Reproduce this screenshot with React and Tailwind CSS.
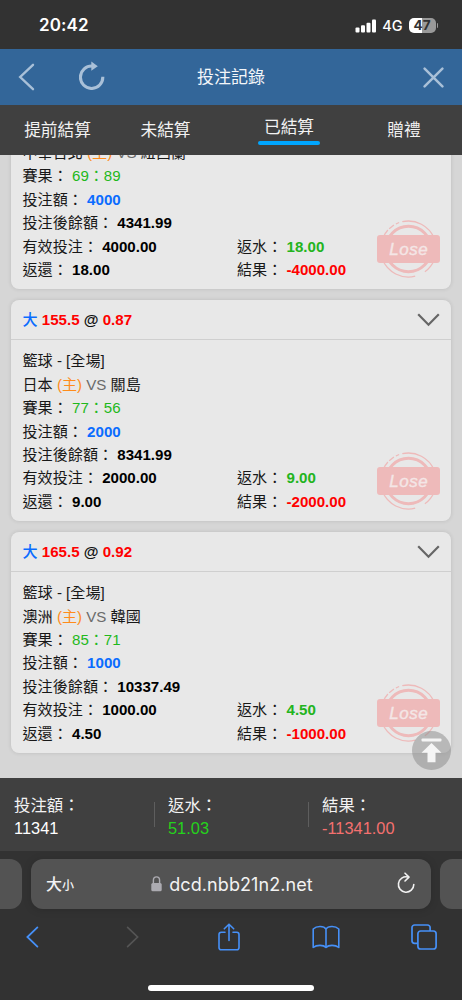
import clsx from 'clsx';

const TABS = [
  { id: 'early', label: '提前結算' },
  { id: 'open', label: '未結算' },
  { id: 'settled', label: '已結算' },
  { id: 'gift', label: '贈禮' },
];

const BETS = [
  {
    id: 1,
    home: '中華台北',
    away: '紐西蘭',
    score: '69：89',
    stake: '4000',
    balance: '4341.99',
    valid: '4000.00',
    rebate: '18.00',
    result: '-4000.00',
  },
  {
    id: 2,
    line: '155.5',
    odds: '0.87',
    league: '籃球 - [全場]',
    home: '日本',
    away: '關島',
    score: '77：56',
    stake: '2000',
    balance: '8341.99',
    valid: '2000.00',
    rebate: '9.00',
    result: '-2000.00',
  },
  {
    id: 3,
    line: '165.5',
    odds: '0.92',
    league: '籃球 - [全場]',
    home: '澳洲',
    away: '韓國',
    score: '85：71',
    stake: '1000',
    balance: '10337.49',
    valid: '1000.00',
    rebate: '4.50',
    result: '-1000.00',
  },
];

const TOTALS = [
  { label: '投注額：', value: '11341', tone: 'text-white' },
  { label: '返水：', value: '51.03', tone: 'text-[#25d21c]' },
  { label: '結果：', value: '-11341.00', tone: 'text-[#f4706f]' },
];

function StatusBar() {
  return (
    <div className="flex h-[49px] shrink-0 items-center justify-between bg-[#323232] pl-[39px] pr-[24px] pt-[2px] font-['Inter'] text-white">
      <span className="text-[17px] font-semibold tracking-[0.1px]">20:42</span>
      <div className="flex items-center">
        <svg width="22" height="14" viewBox="0 0 22 14" fill="currentColor" aria-hidden="true">
          <rect x="0.5" y="8.5" width="4" height="5" rx="1" />
          <rect x="6" y="6.3" width="4" height="7.2" rx="1" />
          <rect x="11.5" y="3.7" width="4" height="9.8" rx="1" />
          <rect x="17" y="0.5" width="4" height="13" rx="1" />
        </svg>
        <span className="ml-[5px] text-[14.5px] font-medium">4G</span>
        <span className="ml-[6px] flex h-[15px] w-[27px] items-center justify-center rounded-[5px] bg-[linear-gradient(90deg,#fff_48%,#999_48%)] text-[13.5px] font-bold leading-none text-[#323232]">
          47
        </span>
        <span className="ml-px h-[5px] w-[1.5px] rounded-r-full bg-[#999]" />
      </div>
    </div>
  );
}

function Header() {
  return (
    <header className="grid h-[56px] shrink-0 grid-cols-[1fr_auto_1fr] items-center bg-[#336699] px-[18px] text-[#a9c0d8]">
      <div className="flex items-center gap-[43px]">
        <svg width="18" height="28" viewBox="0 0 18 28" fill="none" stroke="currentColor" strokeWidth="2.4" aria-hidden="true">
          <path d="M15 1.8 2.2 14 15 26.2" strokeLinecap="round" />
        </svg>
        <svg className="mb-[3px]" width="26" height="29" viewBox="0 0 26 29" fill="none" aria-hidden="true">
          <path d="M13.5 5.1A11.2 11.2 0 1 0 23.8 15.8" stroke="currentColor" strokeWidth="3.1" />
          <path d="M12.3 0.6 18.8 5.2 12.3 9.8Z" fill="currentColor" />
        </svg>
      </div>
      <h1 className="pt-px text-[17px] text-[#f3f6f9]">投注記錄</h1>
      <svg className="justify-self-end" width="21" height="21" viewBox="0 0 21 21" fill="none" stroke="currentColor" strokeWidth="2.5" strokeLinecap="round" aria-hidden="true">
        <path d="m1.6 1.6 17.8 17.8M19.4 1.6 1.6 19.4" />
      </svg>
    </header>
  );
}

function Tabs({ active }) {
  return (
    <nav className="grid h-[50px] shrink-0 grid-cols-[115px_101px_146px_84px] justify-items-center bg-[#404040] text-[16.7px] leading-[26px] text-[#f2f2f2]">
      {TABS.map((tab) => (
        <div
          key={tab.id}
          className={clsx(
            tab.id === active
              ? 'mt-[10px] flex h-[30px] w-[62px] flex-col items-center justify-between'
              : 'mt-[13px]'
          )}
        >
          <span className="whitespace-nowrap">{tab.label}</span>
          {tab.id === active && <span className="h-[4px] w-full shrink-0 rounded-full bg-[#00a6ff]" />}
        </div>
      ))}
    </nav>
  );
}

function LoseStamp() {
  return (
    <svg
      className="absolute bottom-[10px] right-[11px] text-[#eebaba]"
      width="63"
      height="60"
      viewBox="0.5 0 63 60"
      fill="none"
      aria-hidden="true"
    >
      <circle cx="32" cy="30" r="22.7" stroke="currentColor" strokeWidth="3" />
      <g stroke="currentColor" strokeWidth="1.3">
        <path d="M25.8 2.7A28 28 0 0 1 57.8 19.5" />
        <path d="M19.4 5 22.6 3.5" />
        <path d="M12.7 9.7 17.4 6.1" />
        <path d="M6.2 19.2A28 28 0 0 1 11.4 11" />
        <path d="M6 40.6A28 28 0 0 0 38.7 57.2" />
        <path d="M48.4 52.8A28 28 0 0 0 58 40.6" />
      </g>
      <rect x="0.5" y="16" width="63" height="28" rx="3" fill="currentColor" />
      <text
        x="32.3"
        y="36.2"
        textAnchor="middle"
        fontFamily="Liberation Sans, sans-serif"
        fontSize="17"
        fontStyle="italic"
        letterSpacing="0.6"
        fill="#f4e6e6"
        stroke="#f4e6e6"
        strokeWidth="0.4"
      >
        Lose
      </text>
    </svg>
  );
}

function Amount({ label, value, tone = 'text-black' }) {
  return (
    <p>
      {label}： <b className={tone}>{value}</b>
    </p>
  );
}

function BetCard({ bet }) {
  return (
    <article className="relative shrink-0 rounded-[8px] bg-[#e8e8e8] text-[15.1px] text-[#181818] shadow-[0_0_4px_rgba(0,0,0,0.12)]">
      {bet.line && (
        <div className="flex h-[40px] items-center justify-between border-b border-[#cfcfcf] pl-[11.5px] pr-[11px]">
          <p className="pt-px font-bold text-[#ff0000]">
            <span className="font-medium text-[#0a6cff]">大</span> {bet.line}{' '}
            <span className="text-[#111]">@</span> {bet.odds}
          </p>
          <svg width="23" height="14" viewBox="0 0 23 14" fill="none" stroke="#666" strokeWidth="2.2" aria-hidden="true">
            <path d="M1.2 1.3 11.5 11.8 21.8 1.3" />
          </svg>
        </div>
      )}
      <div className="px-[11.5px] pb-[8px] pt-[9px] leading-[23.4px]">
        {bet.league && <p>{bet.league}</p>}
        <p>
          {bet.home} <span className="text-[#ff8c1a]">(主)</span>{' '}
          <span className="text-[#6b6b6b]">VS</span> {bet.away}
        </p>
        <p>
          賽果： <span className="text-[#1fb81c]">{bet.score}</span>
        </p>
        <Amount label="投注額" value={bet.stake} tone="text-[#0a6cff]" />
        <Amount label="投注後餘額" value={bet.balance} />
        <div className="grid grid-cols-[214.5px_1fr]">
          <Amount label="有效投注" value={bet.valid} />
          <Amount label="返水" value={bet.rebate} tone="text-[#23b41e]" />
          <Amount label="返還" value={bet.rebate} />
          <Amount label="結果" value={bet.result} tone="text-[#ff0000]" />
        </div>
      </div>
      <LoseStamp />
    </article>
  );
}

function Totals() {
  return (
    <div className="grid h-[73px] shrink-0 grid-cols-3 bg-[#404040]">
      {TOTALS.map((item, index) => (
        <div key={item.label} className="flex items-center">
          <span className={clsx('h-[25px] w-px', index > 0 && 'bg-[#5e5e5e]')} />
          <div className="pl-[13px] pt-[4px] text-[16.4px] leading-[23px] text-[#f2f2f2]">
            <p>{item.label}</p>
            <p className={item.tone}>{item.value}</p>
          </div>
        </div>
      ))}
    </div>
  );
}

function BrowserBar() {
  return (
    <footer className="flex flex-1 flex-col bg-[#323232] pt-[8px] font-['Inter','Noto_Sans_CJK_TC',sans-serif]">
      <div className="flex h-[50px] shrink-0 gap-[9px]">
        <div className="w-[22px] rounded-r-[12px] bg-[#535353]" />
        <div className="flex flex-1 items-center justify-between rounded-[12px] bg-[#535353] pl-[15px] pr-[16px] text-[#f2f2f2] shadow-[0_1px_8px_rgba(0,0,0,0.15)]">
          <span className="flex items-baseline font-medium">
            <span className="text-[16px]">大</span>
            <span className="text-[12px]">小</span>
          </span>
          <span className="flex items-center pr-[7px]">
            <svg width="11" height="16" viewBox="0 0 11 16" aria-hidden="true">
              <path d="M2.4 8V4.3a3.1 3.4 0 0 1 6.2 0V8" fill="none" stroke="#acabb1" strokeWidth="1.4" />
              <rect x="0.3" y="7" width="10.4" height="8.3" rx="1.6" fill="#acabb1" />
            </svg>
            <span className="ml-[7px] text-[18px] tracking-[0.08px]">dcd.nbb21n2.net</span>
          </span>
          <svg className="mb-[2px]" width="18" height="22" viewBox="0 0 18 22" fill="none" stroke="currentColor" strokeWidth="1.6" strokeLinecap="round" strokeLinejoin="round" aria-hidden="true">
            <path d="M10.8 5A7.7 7.7 0 1 0 16.8 12.6" />
            <path d="m8 1.2 4 3.9-4 3.9" />
          </svg>
        </div>
        <div className="w-[22px] rounded-l-[12px] bg-[#535353]" />
      </div>
      <div className="mt-[13px] grid h-[30px] grid-cols-[repeat(5,28px)] items-center justify-between justify-items-center pl-[18px] pr-[24px] text-[#4690f7]">
        <svg width="13" height="22" viewBox="0 0 13 22" fill="none" stroke="currentColor" strokeWidth="1.8" strokeLinecap="round" aria-hidden="true">
          <path d="M11.4 1.4 1.4 11l10 9.6" />
        </svg>
        <svg className="ml-[4px]" width="13" height="22" viewBox="0 0 13 22" fill="none" stroke="#555" strokeWidth="1.7" strokeLinecap="round" aria-hidden="true">
          <path d="m1.6 1.4 10 9.6-10 9.6" />
        </svg>
        <svg className="ml-px" width="22" height="28" viewBox="0 0 22 28" fill="none" stroke="currentColor" strokeWidth="1.6" strokeLinecap="round" strokeLinejoin="round" aria-hidden="true">
          <path d="M7 9.2H3.3A2.3 2.3 0 0 0 1 11.5v13a2.3 2.3 0 0 0 2.3 2.3h15.4a2.3 2.3 0 0 0 2.3-2.3v-13a2.3 2.3 0 0 0-2.3-2.3H15" />
          <path d="M11 17.4V1.4M6.3 5.8 11 1.2l4.7 4.6" />
        </svg>
        <svg width="28" height="24" viewBox="0 0 28 24" fill="none" stroke="currentColor" strokeWidth="1.6" strokeLinejoin="round" aria-hidden="true">
          <path d="M14 4.2C12 .7 4.6.7 1.2 4v18.4c3.6-2.7 10.2-2.7 12.8 0 2.6-2.7 9.2-2.7 12.8 0V4C23.4.7 16 .7 14 4.2Z" />
          <path d="M14 4.2v18.2" />
        </svg>
        <svg width="26" height="26" viewBox="0 0 26 26" fill="none" stroke="currentColor" strokeWidth="1.7" aria-hidden="true">
          <rect x="6.9" y="7" width="18.2" height="18" rx="2.8" />
          <path d="M6.9 19.3H3.6A2.6 2.6 0 0 1 1 16.7V3.6A2.6 2.6 0 0 1 3.6 1h12.9a2.6 2.6 0 0 1 2.6 2.6V7" />
        </svg>
      </div>
      <div className="mt-[33px] h-[6px] w-[166px] self-center rounded-full bg-white" />
    </footer>
  );
}

export default function App() {
  return (
    <div className="flex h-[1000px] w-[462px] flex-col overflow-hidden font-['Liberation_Sans','Noto_Sans_CJK_TC',sans-serif]">
      <StatusBar />
      <Header />
      <Tabs active="settled" />
      <main className="relative flex h-[623px] shrink-0 flex-col justify-end gap-[11px] overflow-hidden bg-[#d6d6d6] px-[11px] pb-[25px]">
        {BETS.map((bet) => (
          <BetCard key={bet.id} bet={bet} />
        ))}
        <button
          className="absolute bottom-[8px] right-[11px] flex h-[39px] w-[39px] items-center justify-center rounded-full bg-[#888888]/50"
          aria-label="Top"
        >
          <svg width="21" height="25" viewBox="0 0 21 25" fill="#f5f5f5" aria-hidden="true">
            <rect x="0.5" y="0.5" width="20" height="3" rx="1" />
            <path d="M10.5 5 20.5 14.8H14.5V24.3H6.5V14.8H.5Z" />
          </svg>
        </button>
      </main>
      <Totals />
      <BrowserBar />
    </div>
  );
}
